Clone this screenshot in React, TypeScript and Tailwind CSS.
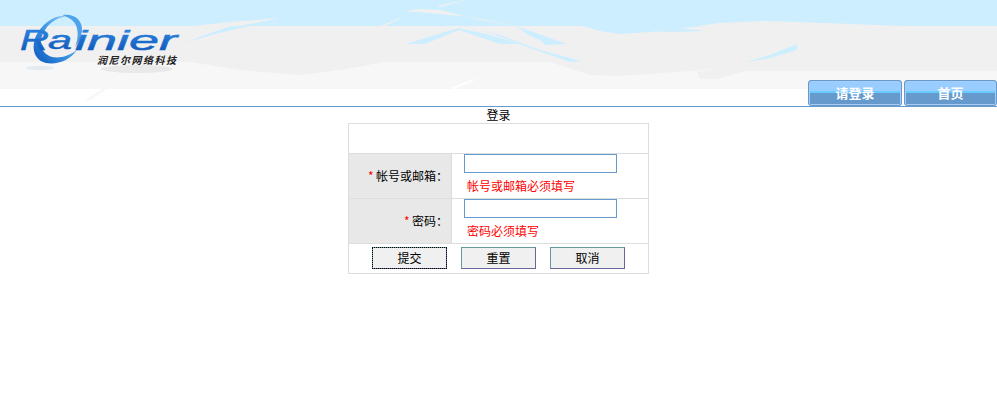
const cjk = { fontFamily: "'Noto Sans CJK SC', 'Liberation Sans', sans-serif" };

function HeaderArt() {
  return (
    <svg className="absolute inset-0" width="997" height="106" viewBox="0 0 997 106">
      <defs>
        <linearGradient id="logoText" x1="0" y1="0" x2="0" y2="1">
          <stop offset="0" stopColor="#2f8be6" />
          <stop offset="1" stopColor="#0a52b5" />
        </linearGradient>
        <linearGradient id="logoRing" x1="1" y1="0" x2="0" y2="1">
          <stop offset="0" stopColor="#a9d8f7" />
          <stop offset="0.5" stopColor="#3d97e6" />
          <stop offset="1" stopColor="#0b57bd" />
        </linearGradient>
      </defs>
      <rect width="997" height="26" fill="#cceeff" />
      <rect y="26" width="997" height="36" fill="#f0f0f0" />
      <rect y="62" width="997" height="27" fill="#f7f7f7" />
      {/* sky coloured swooshes */}
      <polygon points="406,44 458,28 490,35 520,44 500,44 459,30 425,44" fill="#cceeff" />
      <polygon points="462,26 500,35 540,50 581,61 570,62 530,48 490,33" fill="#cceeff" />
      <polygon points="516,26 567,44 545,45 540,40 530,36" fill="#cceeff" />
      <polygon points="583,26 600,31 620,34 650,32 680,28 705,26" fill="#cceeff" />
      <polygon points="654,32 680,28 705,31 670,32" fill="#cceeff" />
      <polygon points="743,63 770,55 797,44 797,50 770,58" fill="#cceeff" />
      <polygon points="185,43 205,35 231,26 250,26 215,34" fill="#cceeff" />
      {/* grey streaks over the sky */}
      <polygon points="380,26 400,18 402,18 385,26" fill="#f0f0f0" />
      <polygon points="405,11 420,9 440,10 480,20 520,26 470,17 430,13" fill="#f0f0f0" />
      <polygon points="437,6 465,0 467,0 440,7" fill="#f0f0f0" />
      <polygon points="697,26 720,23 760,21 797,22 850,24 900,26" fill="#f0f0f0" />
      <polygon points="183,27 230,22 280,18 240,26" fill="#f0f0f0" />
      {/* grey running into the lighter band */}
      <polygon points="190,62 240,70 300,75 340,70 385,62" fill="#f0f0f0" />
      <polygon points="550,62 590,75 615,76 650,74 715,69 697,72 700,79 717,79 745,71 997,71 997,62" fill="#f0f0f0" />
      <polygon points="450,88 475,79 477,79 455,89" fill="#ffffff" />
      <polygon points="85,100 130,72 133,72 90,100" fill="#f7f7f7" />
      {/* logo */}
      <path
        d="M68 16 C54 14 42 24 36 36 C31 48 34 60 46 63 C58 65 70 60 77 50 C66 58 54 60 46 54 C38 47 40 36 47 27 C53 20 60 17 68 16 Z"
        fill="url(#logoRing)"
      />
      <path d="M62 15 C74 13 83 20 82 31 C81 37 79 42 75 47 C79 37 79 26 72 20 C69 18 66 16 62 15 Z" fill="#4ea3ea" />
      <ellipse cx="40" cy="68" rx="14" ry="2" fill="#e3ebf2" />
      <ellipse cx="137" cy="69" rx="36" ry="4" fill="#e9e9e9" />
      <g fontFamily="'Liberation Sans', sans-serif" fontStyle="italic" fill="url(#logoText)" stroke="url(#logoText)" strokeWidth="0.5">
        <text x="20" y="50" fontSize="29" textLength="29" lengthAdjust="spacingAndGlyphs">R</text>
        <text x="48" y="49" fontSize="25" textLength="24" lengthAdjust="spacingAndGlyphs">a</text>
        <text x="75" y="50" fontSize="27" textLength="102" lengthAdjust="spacingAndGlyphs">inier</text>
      </g>
      <text x="97" y="64" fontSize="10" fontWeight="700" fontStyle="italic" fill="#222222" fontFamily="'Noto Sans CJK SC', sans-serif" textLength="79" lengthAdjust="spacing">润尼尔网络科技</text>
    </svg>
  );
}

function NavTab({ label, width }: { label: string; width: string }) {
  return (
    <div className={`relative h-[26px] ${width} rounded-[3px] border border-[#6699cc] bg-[#6699cc] overflow-hidden shadow-[inset_0_0_0_1px_#a8cdf5]`}>
      <div className="mx-[1px] mt-[1px] h-[9px] bg-[#99ccff]" />
      <div className="mx-[1px] h-[2px] bg-[#66ccff]" />
      <span className="absolute inset-0 flex items-center justify-center text-[13px] font-bold text-white">{label}</span>
    </div>
  );
}

function FormButton({ label, focused }: { label: string; focused?: boolean }) {
  return (
    <button
      className={`w-[75px] h-[22px] border border-t-[#669999] border-l-[#669999] border-r-[#666699] border-b-[#666699] bg-[#f0f0f0] text-[12px] leading-none text-black ${
        focused ? "outline-1 outline-dotted outline-black -outline-offset-1" : ""
      }`}
    >
      {label}
    </button>
  );
}

function FieldRow({ label, error }: { label: string; error: string }) {
  return (
    <tr className="h-[45px]">
      <td className="w-[103px] border border-[#dddddd] bg-[#e8e8e8] pr-[3px] text-right align-middle text-[12px] text-black">
        <span className="mr-[1px] inline-block w-[7px] text-left text-[#ff0000]">*</span>
        {label}：
      </td>
      <td className="border border-[#dddddd] px-3 align-top">
        <input className="block h-[19px] w-[153px] border border-[#6699cc] bg-white" />
        <div className="mt-[5px] pl-[3px] text-[12px] leading-[16px] text-[#ff0000]">{error}</div>
      </td>
    </tr>
  );
}

export default function App() {
  return (
    <div className="min-h-[400px] bg-white" style={cjk}>
      {/* Header */}
      <header className="relative flex h-[107px] items-end justify-end gap-[2px] border-b border-[#6699cc]">
        <HeaderArt />
        <NavTab label="请登录" width="w-[94px]" />
        <NavTab label="首页" width="w-[93px]" />
      </header>

      <main className="flex flex-col items-center">
        <div className="h-[16px] text-[12px] leading-[16px] text-black">登录</div>
        <table className="w-[301px] border-collapse">
          <tbody>
            <tr className="h-[30px]">
              <td colSpan={2} className="border border-[#dddddd]" />
            </tr>
            <FieldRow label="帐号或邮箱" error="帐号或邮箱必须填写" />
            <FieldRow label="密码" error="密码必须填写" />
            <tr className="h-[30px]">
              <td colSpan={2} className="border border-[#dddddd] align-top">
                <div className="flex justify-center gap-[14px] pt-[3px]">
                  <FormButton label="提交" focused />
                  <FormButton label="重置" />
                  <FormButton label="取消" />
                </div>
              </td>
            </tr>
          </tbody>
        </table>
      </main>
    </div>
  );
}
